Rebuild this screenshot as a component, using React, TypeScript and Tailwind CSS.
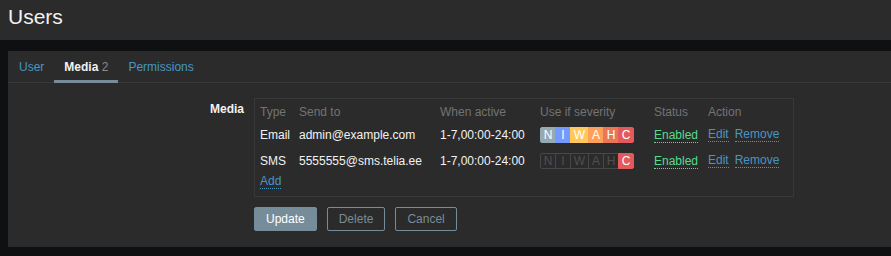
const severities = ["N", "I", "W", "A", "H", "C"];

const sevColors: Record<string, string> = {
  N: "bg-[#97aab3] border-[#97aab3]",
  I: "bg-[#7499ff] border-[#7499ff]",
  W: "bg-[#ffc859] border-[#ffc859]",
  A: "bg-[#ffa059] border-[#ffa059]",
  H: "bg-[#e97659] border-[#e97659]",
  C: "bg-[#e45959] border-[#e45959]",
};

const media = [
  { type: "Email", sendTo: "admin@example.com", when: "1-7,00:00-24:00", active: severities },
  { type: "SMS", sendTo: "5555555@sms.telia.ee", when: "1-7,00:00-24:00", active: ["C"] },
];

const SeverityBox = ({ active }: { active: string[] }) => {
  return (
    <div className="flex h-[16px]">
      {severities.map((s, i) => {
        const on = active.includes(s);
        return (
          <span
            key={s}
            className={`flex items-center justify-center h-[16px] border text-[12px] leading-none ${
              s === "W" ? "w-[19px]" : "w-[16px]"
            } ${i === 0 ? "rounded-l-[2px]" : ""} ${i === 5 ? "rounded-r-[2px]" : ""} ${
              i > 0 ? "-ml-px" : ""
            } ${on ? `${sevColors[s]} text-white` : "border-[#474747] text-[#4f4f4f]"}`}
          >
            {s}
          </span>
        );
      })}
    </div>
  );
};

export default function App() {
  return (
    <div
      className="min-h-screen bg-[#0e1012] text-[12px] text-[#f2f2f2]"
      style={{ fontFamily: '"Liberation Sans", Arial, sans-serif' }}
    >
      <div className="h-[40px] bg-[#2b2b2b] pl-[8px] pt-[5px]">
        <h1 className="text-[21px] leading-[24px] text-[#f2f2f2]">Users</h1>
      </div>

      <div className="pt-[11px] pl-[8px] pb-[9px]">
        <div className="bg-[#2b2b2b]">
          {/* tabs */}
          <div className="flex pl-px border-b border-[#383838]">
            {[
              { name: "User", active: false },
              { name: "Media", active: true, count: 2 },
              { name: "Permissions", active: false },
            ].map((t) => (
              <div
                key={t.name}
                className={`px-[10px] pt-[9px] pb-[6px] leading-[14px] border-b-[3px] -mb-px ${
                  t.active ? "border-[#768d99] font-bold text-[#f2f2f2]" : "border-transparent text-[#4796c4]"
                }`}
              >
                {t.name}
                {t.count && <span className="font-normal text-[#8a8a8a]"> {t.count}</span>}
              </div>
            ))}
          </div>

          {/* form */}
          <div className="pt-[15px] pb-[16px]">
            <div className="flex items-start">
              <div className="w-[246px] shrink-0 pr-[10px] pt-[4px] text-right font-bold leading-[14px]">
                Media
              </div>
              <div className="w-[540px] border border-[#383838] pl-[5px] pb-[7px] leading-[14px]">
                <div className="flex h-[23px] pt-[6px] text-[#737373]">
                  <div className="w-[39px]">Type</div>
                  <div className="w-[141px]">Send to</div>
                  <div className="w-[100px]">When active</div>
                  <div className="w-[114px]">Use if severity</div>
                  <div className="w-[54px]">Status</div>
                  <div>Action</div>
                </div>
                {media.map((m, idx) => (
                  <div key={m.type} className={`flex items-center ${idx === 0 ? "h-[25px]" : "h-[27px]"}`}>
                    <div className="w-[39px]">{m.type}</div>
                    <div className="w-[141px]">{m.sendTo}</div>
                    <div className="w-[100px]">{m.when}</div>
                    <div className="w-[114px]">
                      <SeverityBox active={m.active} />
                    </div>
                    <div className="w-[54px]">
                      <span className="border-b border-dotted border-[#59db8f] text-[#59db8f]">Enabled</span>
                    </div>
                    <div className="flex gap-[6px]">
                      <span className="border-b border-dotted border-[#4796c4] text-[#4796c4]">Edit</span>
                      <span className="border-b border-dotted border-[#4796c4] text-[#4796c4]">Remove</span>
                    </div>
                  </div>
                ))}
                <div className="h-[15px]">
                  <span className="inline-block border-b border-dotted border-[#4796c4] text-[#4796c4]">Add</span>
                </div>
              </div>
            </div>

            <div className="flex gap-[10px] mt-[10px] ml-[246px]">
              <button className="h-[24px] px-[11px] rounded-[2px] border border-[#768d99] bg-[#768d99] text-white">
                Update
              </button>
              <button className="h-[24px] px-[11px] rounded-[2px] border border-[#768d99] text-[#768d99]">
                Delete
              </button>
              <button className="h-[24px] px-[11px] rounded-[2px] border border-[#768d99] text-[#768d99]">
                Cancel
              </button>
            </div>
          </div>
        </div>
      </div>
    </div>
  );
}
